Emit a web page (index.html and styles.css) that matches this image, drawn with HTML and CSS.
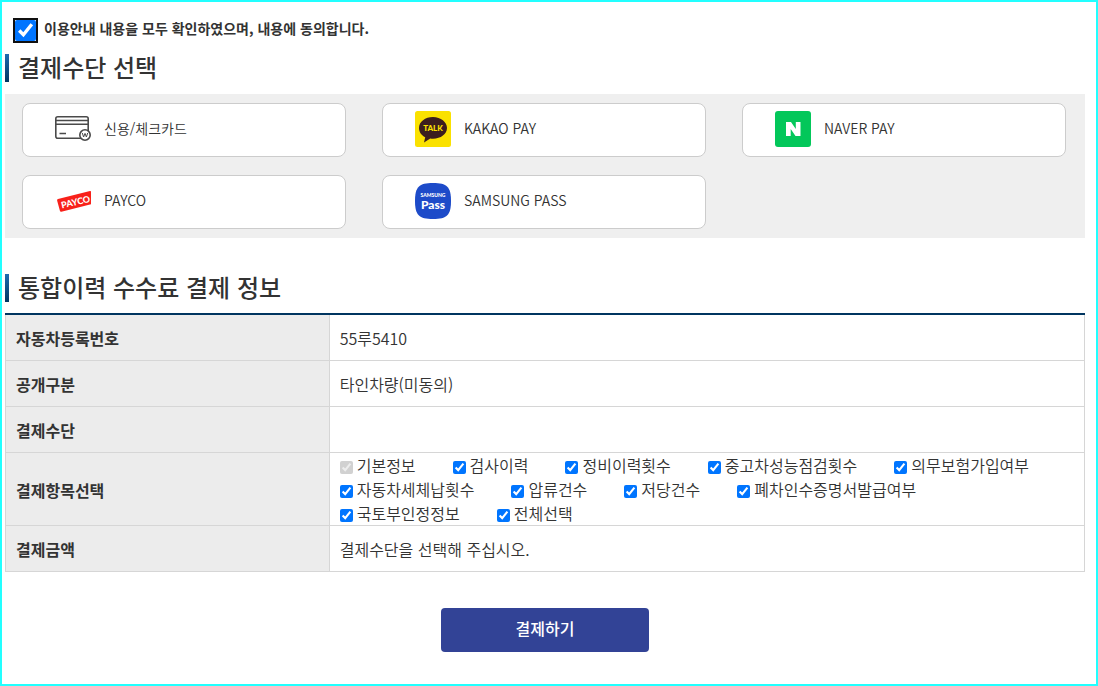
FILE: index.html
```html
<!DOCTYPE html>
<html lang="ko">
<head>
  <meta charset="UTF-8" />
  <meta name="viewport" content="width=device-width, initial-scale=1.0"/>
  <title>통합이력 수수료 결제</title>
  <link rel="stylesheet" href="styles.css">
</head>
<body>
  <main class="page">

    <label class="agree">
      <input type="checkbox" class="agree-check" checked>
      <span>이용안내 내용을 모두 확인하였으며, 내용에 동의합니다.</span>
    </label>

    <section class="methods">
      <h2 class="title">결제수단 선택</h2>
      <div class="method-list">
        <button type="button" class="method">
          <svg class="icon" viewBox="0 0 36 36" fill="none" stroke="#4a4a4a" stroke-width="1.6">
            <rect x="0.8" y="5.8" width="32.4" height="21.4" rx="2"/>
            <path d="M1 9.5h32M1 13.2h32M4.5 22.5h6.5"/>
            <circle cx="30" cy="24" r="5.2" fill="#fff"/>
            <path d="M27.3 22l1.3 4 1.4-3.6 1.4 3.6 1.3-4" stroke-width="1"/>
          </svg>
          <span>신용/체크카드</span>
        </button>
        <button type="button" class="method">
          <svg class="icon" viewBox="0 0 36 36">
            <rect width="36" height="36" rx="2.5" fill="#fae100"/>
            <path d="M18 6C10.200 6 4 10.700 4 17c0 4 2.400 7.300 6.200 9.200L9 31.500l6.300-4c.9.100 1.800.200 2.700.200 7.800 0 14-4.700 14-10.700S25.800 6 18 6z" fill="#3b1e1e"/>
            <text x="18" y="20" class="talk">TALK</text>
          </svg>
          <span>KAKAO PAY</span>
        </button>
        <button type="button" class="method">
          <svg class="icon" viewBox="0 0 36 36">
            <rect width="36" height="36" rx="3" fill="#03c75a"/>
            <path d="M11 11h5l4.800 7v-7H25.500v14h-5l-4.800-7v7H11z" fill="#fff"/>
          </svg>
          <span>NAVER PAY</span>
        </button>
        <button type="button" class="method">
          <svg class="icon" viewBox="0 0 36 36">
            <path d="M3 16L35 8q1-.2 1 .8v12.400L6.400 28.700q-1.200.3-1.500-.9L2.100 17.500q-.2-1.200.9-1.500z" fill="#f8211a"/>
            <text x="7" y="25.500" class="payco" transform="rotate(-13 7 25.500)">PAYCO</text>
          </svg>
          <span>PAYCO</span>
        </button>
        <button type="button" class="method">
          <svg class="icon" viewBox="0 0 36 36">
            <path d="M18 0C32 0 36 4 36 18S32 36 18 36 0 32 0 18 4 0 18 0z" fill="#1d4bc9"/>
            <text x="18" y="14" class="samsung">SAMSUNG</text>
            <text x="18" y="25.500" class="pass">Pass</text>
          </svg>
          <span>SAMSUNG PASS</span>
        </button>
      </div>
    </section>

    <section class="info">
      <h2 class="title">통합이력 수수료 결제 정보</h2>
      <table class="info-table">
        <tbody>
          <tr><th scope="row">자동차등록번호</th><td>55루5410</td></tr>
          <tr><th scope="row">공개구분</th><td>타인차량(미동의)</td></tr>
          <tr><th scope="row">결제수단</th><td></td></tr>
          <tr>
            <th scope="row">결제항목선택</th>
            <td class="items-cell">
              <div class="items">
                <label><input type="checkbox" checked disabled>기본정보</label>
                <label><input type="checkbox" checked>검사이력</label>
                <label><input type="checkbox" checked>정비이력횟수</label>
                <label><input type="checkbox" checked>중고차성능점검횟수</label>
                <label><input type="checkbox" checked>의무보험가입여부</label>
                <label><input type="checkbox" checked>자동차세체납횟수</label>
                <label><input type="checkbox" checked>압류건수</label>
                <label><input type="checkbox" checked>저당건수</label>
                <label><input type="checkbox" checked>폐차인수증명서발급여부</label>
                <label><input type="checkbox" checked>국토부인정정보</label>
                <label><input type="checkbox" checked>전체선택</label>
              </div>
            </td>
          </tr>
          <tr><th scope="row">결제금액</th><td>결제수단을 선택해 주십시오.</td></tr>
        </tbody>
      </table>
    </section>

    <button type="submit" class="pay-btn">결제하기</button>

  </main>
</body>
</html>
```
FILE: styles.css
```css
* {margin: 0; padding: 0; box-sizing: border-box;}

body {
  font-family: "Noto Sans CJK KR", sans-serif;
  font-size: 16px;
  line-height: 24px;
  color: #333;
  background: #fff;
}

button {font-family: inherit; color: inherit; cursor: pointer;}

.page {
  min-height: 100vh;
  padding: 16px 11px 32px 3px;
  border: 2px solid #2ff;
}

/* agreement */
.agree {
  display: flex;
  align-items: flex-start;
  gap: 8px;
  padding-left: 10px;
  font-size: 14px;
  font-weight: 700;
  line-height: 20px;
}

.agree-check {
  width: 21px;
  height: 21px;
  margin-top: 2px;
  outline: 2px solid #101010;
  border-radius: 2px;
}

/* section titles */
.title {
  position: relative;
  padding-left: 13px;
  padding-bottom: 2px;
  font-size: 24px;
  font-weight: 500;
  line-height: 26px;
}

.title::before {
  content: "";
  position: absolute;
  top: 0;
  left: 0;
  width: 4px;
  height: 28px;
  background: linear-gradient(#1f6bb0, #003560);
}

/* payment methods */
.methods {margin-top: 13px;}

.method-list {
  display: grid;
  grid-template-columns: repeat(3, 1fr);
  gap: 18px 36px;
  margin-top: 12px;
  padding: 9px 19px 9px 17px;
  background: #efefef;
}

.method {
  display: flex;
  align-items: center;
  gap: 13px;
  height: 54px;
  padding: 0 32px 2px;
  font-size: 14px;
  font-weight: 350;
  background: #fff;
  border: 1px solid #ccc;
  border-radius: 8px;
}

.method span {padding-bottom: 2px;}

.icon {width: 36px; height: 36px;}

.icon text {
  font-family: Lato, sans-serif;
  font-weight: 900;
  fill: #fff;
}

.icon .talk {font-size: 8px; text-anchor: middle; fill: #fae100;}
.icon .payco {font-size: 9px;}
.icon .samsung {font-size: 5px; text-anchor: middle;}
.icon .pass {font-size: 12px; text-anchor: middle;}

/* payment info */
.info {margin-top: 36px;}

.info-table {
  width: 100%;
  margin-top: 11px;
  border-collapse: collapse;
  border-top: 2px solid #003560;
}

.info-table th,
.info-table td {
  height: 46px;
  padding: 2px 10px 0;
  border: 1px solid #d6d6d6;
  text-align: left;
}

.info-table tr:first-child th,
.info-table tr:first-child td {border-top: 0;}

.info-table th {width: 30%; font-weight: 700; background: #ececec;}
.info-table td {font-weight: 350;}
.info-table .items-cell {padding-top: 0;}

.items {
  display: flex;
  flex-wrap: wrap;
  column-gap: 37px;
  padding-right: 24px;
}

.items label {
  display: flex;
  align-items: center;
  gap: 4px;
}

.items input {width: 13px; height: 13px; margin-top: 5px;}

.pay-btn {
  display: block;
  width: 208px;
  height: 44px;
  margin: 36px auto 0;
  padding-bottom: 4px;
  font-size: 16px;
  font-weight: 500;
  color: #fff;
  background: #324396;
  border: 0;
  border-radius: 4px;
}
```
